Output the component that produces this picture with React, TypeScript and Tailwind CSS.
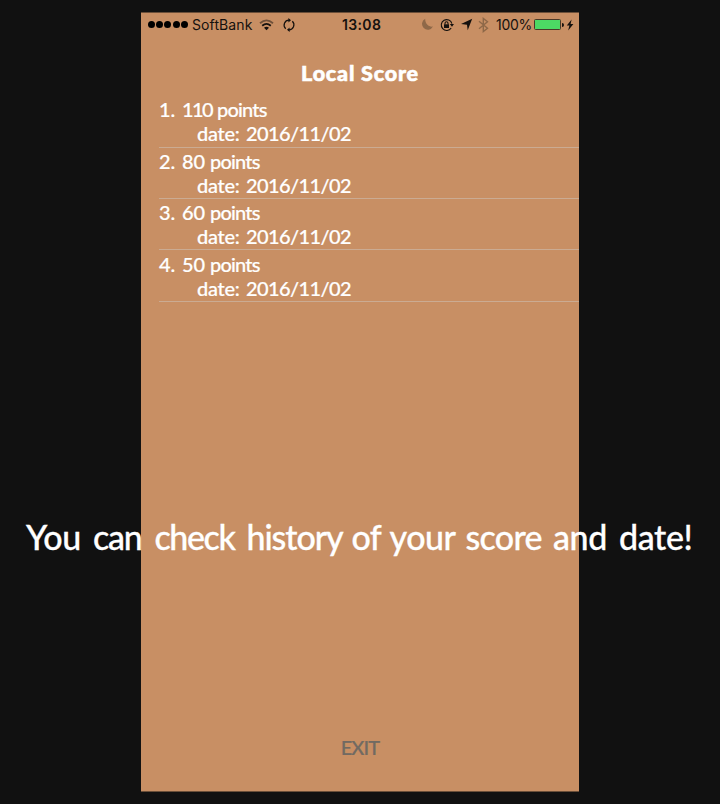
const headline = [
  { text: "You", cls: "w-[67px] tracking-[-0.4px]" },
  { text: "can", cls: "w-[61.5px] tracking-[-1.2px]" },
  { text: "check", cls: "w-[92px] tracking-[-1.4px]" },
  { text: "history", cls: "w-[105px] tracking-[-1.1px]" },
  { text: "of", cls: "w-[38px] tracking-[-0.6px]" },
  { text: "your", cls: "w-[76px] tracking-[-0.5px]" },
  { text: "score", cls: "w-[87.5px] tracking-[-0.7px]" },
  { text: "and", cls: "w-[66px] tracking-[-0.4px]" },
  { text: "date!", cls: "w-[80px] tracking-[-0.4px]" },
];

const scores = [
  { points: 110, date: "2016/11/02", ptsCls: "w-[35px] tracking-[-1.6px]" },
  { points: 80, date: "2016/11/02", ptsCls: "w-[28px] tracking-[0px]" },
  { points: 60, date: "2016/11/02", ptsCls: "w-[28px] tracking-[0px]" },
  { points: 50, date: "2016/11/02", ptsCls: "w-[28px] tracking-[0px]" },
];

function StatusBar() {
  return (
    <div className="flex h-[23px] items-center pl-[7px] font-['Inter',sans-serif] text-[14px] leading-[23px] text-[#15110e]">
      <div className="flex w-[44px] gap-[0.2px]">
        {[0, 1, 2, 3, 4].map((i) => (
          <span key={i} className="mr-px size-[7px] rounded-full bg-black" />
        ))}
      </div>
      <span className="w-[67px] tracking-[0.1px]">SoftBank</span>
      <svg width="15" height="12" viewBox="0 0 15 12" fill="none" stroke="#15110e" strokeWidth="1.8">
        <path d="M1 4.2Q7.5-1.4 14 4.2" opacity=".5" />
        <path d="M3.2 6.7Q7.5 3.1 11.8 6.7" />
        <path d="M5 8.7Q7.5 6.7 10 8.7L7.5 11.2Z" fill="#15110e" stroke="none" />
      </svg>
      <svg className="ml-[8px]" width="14" height="14" viewBox="0 0 14 14" fill="none" stroke="#15110e" strokeWidth="1.2">
        <path d="M7.2 2.2A4.9 4.9 0 0 0 3.7 10.7M6.8 11.8A4.9 4.9 0 0 0 10.3 3.3" />
        <path d="M6.4 0L9 2.2L6.4 4.4ZM7.6 9.6L5 11.8L7.6 14Z" fill="#15110e" stroke="none" />
      </svg>
      <span className="ml-[46px] w-[79px] font-semibold tracking-[0.35px]">13:08</span>
      <svg width="13" height="13" viewBox="0 0 13 13">
        <path d="M4.2.8A5.8 5.8 0 1 0 12 8.6C7.8 9.3 3.9 5.6 4.2.8Z" fill="#8e6848" />
      </svg>
      <svg className="ml-[6px]" width="14" height="14" viewBox="0 0 14 14" fill="none" stroke="#15110e" strokeWidth="1.1">
        <path d="M11.2 10A5.4 5.4 0 1 1 11.9 5.7" />
        <path d="M9.8 6H14L12 8.7Z" fill="#15110e" stroke="none" />
        <rect x="4" y="6.3" width="5" height="3.7" fill="#15110e" stroke="none" />
        <path d="M5 6.4V5.3a1.5 1.5 0 0 1 3 0V6.4" />
      </svg>
      <svg className="ml-[6px]" width="13" height="13" viewBox="0 0 13 13">
        <path d="M12.2.8L7.7 12.2L7 6.7L1 6Z" fill="#15110e" />
      </svg>
      <svg className="ml-[5px]" width="11" height="16" viewBox="0 0 11 16" fill="none" stroke="#8e6848" strokeWidth="1.4">
        <path d="M1 4.2L9.5 11.3L5.3 14.6V1.4L9.5 4.7L1 11.8" />
      </svg>
      <span className="ml-[7px] w-[38px] whitespace-nowrap tracking-[-0.25px]">100%</span>
      <div className="h-[11px] w-[27px] rounded-[1.5px] border border-[#4a3928] bg-[#4cd964]" />
      <span className="ml-px h-[4px] w-[2px] rounded-r bg-[#15110e]" />
      <svg className="ml-[2px]" width="8" height="12" viewBox="0 0 8 12">
        <path d="M5.6.6L.8 6.5H3.4L2.2 11.4L7.4 4.9H4.6Z" fill="#15110e" />
      </svg>
    </div>
  );
}

export default function App() {
  return (
    <div className="relative h-[804px] w-[720px] overflow-hidden bg-[#111111] pt-[12px] font-['Lato',sans-serif]">
      <div className="mx-auto flex h-[780px] w-[438px] flex-col border-y border-[#6b4f39] bg-[#c88f64]">
        <StatusBar />
        <h1 className="mt-[24px] h-[26px] text-center text-[21.5px] leading-[26px] font-black tracking-[0.8px] text-white [-webkit-text-stroke:0.6px_white]">
          Local Score
        </h1>
        <ul className="mt-[10.2px] ml-[18px] text-[20px] leading-[24px] font-medium text-white [-webkit-text-stroke:0.2px_white]">
          {scores.map((s, i) => (
            <li key={i} className="h-[51.4px] border-b border-[#cbab92] pt-[1.2px]">
              <div className="flex">
                <span className="w-[23px]">{i + 1}.</span>
                <span className={s.ptsCls}>{s.points}</span>
                <span className="tracking-[-0.8px]">points</span>
              </div>
              <div className="flex pl-[38px]">
                <span className="w-[49px] tracking-[-0.3px]">date:</span>
                <span className="tracking-[-0.6px]">{s.date}</span>
              </div>
            </li>
          ))}
        </ul>
        <button className="mx-auto mt-auto mb-[31px] h-[26px] text-[20px] leading-[26px] font-medium tracking-[-0.9px] text-[#716a62] [-webkit-text-stroke:0.2px_#716a62]">
          EXIT
        </button>
      </div>
      <p className="absolute top-[515px] left-[26px] flex text-[34px] leading-[44px] font-medium whitespace-nowrap text-white [-webkit-text-stroke:0.3px_white]">
        {headline.map((w) => (
          <span key={w.text} className={w.cls}>
            {w.text}
          </span>
        ))}
      </p>
    </div>
  );
}
